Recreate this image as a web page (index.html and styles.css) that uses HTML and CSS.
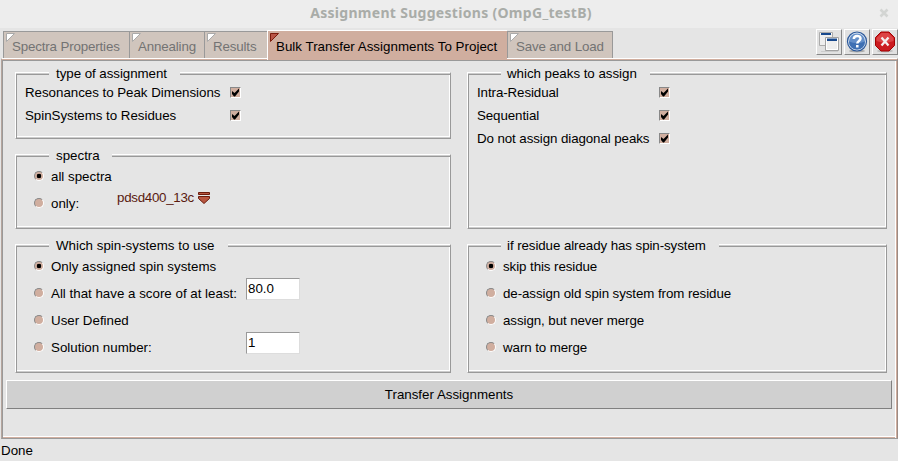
FILE: index.html
```html
<!DOCTYPE html>
<html lang="en">
<head>
<meta charset="utf-8">
<title>Assignment Suggestions (OmpG_testB)</title>
<link rel="stylesheet" href="styles.css">
</head>
<body>
<header class="titlebar"><span class="title">Assignment Suggestions (OmpG_testB)</span>
<svg class="close" width="10" height="10" viewBox="0 0 10 10"><path d="M1.5 1.5l7 7M8.5 1.5l-7 7" stroke="#d3d5d3" stroke-width="2.6"/></svg></header>
<div class="toolbar">
<nav class="tabs">
<div class="tab t1"><svg class="flag" width="9" height="9"><path d="M.5 .5h8l-8 8z"/></svg><span>Spectra Properties</span></div>
<div class="tab t2"><svg class="flag" width="9" height="9"><path d="M.5 .5h8l-8 8z"/></svg><span>Annealing</span></div>
<div class="tab t3"><svg class="flag" width="9" height="9"><path d="M.5 .5h8l-8 8z"/></svg><span>Results</span></div>
<div class="tab t4 active"><svg class="flag" width="9" height="9"><path d="M.5 .5h8l-8 8z"/></svg><span>Bulk Transfer Assignments To Project</span></div>
<div class="tab t5"><svg class="flag" width="9" height="9"><path d="M.5 .5h8l-8 8z"/></svg><span>Save and Load</span></div>
</nav>
<div class="tools">
<button class="tool"><svg width="22" height="22" viewBox="0 0 22 22"><path d="M1.5 1.5h13v13h-13z" fill="#eee" stroke="#aaa"/><path d="M2 2h12v1H2z" fill="#fff"/><path d="M3 2h10v2H3z" fill="#17488d"/><path d="M7.500 6.500h13v13h-13z" fill="#eee" stroke="#a2a2a2"/><path d="M8.500 7.500h11v11h-11z" fill="none" stroke="#fff"/><path d="M9 7.500h10v2.500H9z" fill="#17488d"/><path d="M3 20.500h17" stroke="#ccc"/></svg></button>
<button class="tool"><svg width="22" height="22" viewBox="0 0 22 22"><ellipse cx="11" cy="20" rx="8" ry="1.500" fill="#aaa"/><circle cx="11" cy="10.500" r="9.500" fill="#dce6f2" stroke="#2c599b" stroke-width="1.200"/><circle cx="11" cy="10.500" r="8" fill="#648fc9"/><path d="M3 10.500a8 8 0 0 0 16 0q-8 3-16 0" fill="#3f70b3"/><path d="M7.800 8c0-4 6.700-4 6.700-.4 0 2.400-3.200 2.200-3.200 4.900M11.300 14v2.600" fill="none" stroke="#fff" stroke-width="2.500"/></svg></button>
<button class="tool last"><svg width="22" height="22" viewBox="0 0 22 22"><ellipse cx="11" cy="20" rx="8" ry="1.500" fill="#bbb"/><path d="M7 1h8l5.500 5.500v8L15 20H7l-5.500-5.500v-8z" fill="#cb1b20" stroke="#a40000"/><path d="M7.500 2h7l5 5v3q-8 3-17 0V7z" fill="#dc4345"/><path d="M7.500 6.500l7 8M14.500 6.500l-7 8" stroke="#f4eeee" stroke-width="2.300"/></svg></button>
</div>
</div>
<main class="panel">
<div class="groups">
<section class="group g-type"><h2>type of assignment</h2>
<div class="check wide"><span>Resonances to Peak Dimensions</span><i class="box"><svg width="9" height="9"><path d="M1 3v3l2 2.500h1L8 3.500V.5L3.500 5z"/></svg></i></div>
<div class="check wide"><span>SpinSystems to Residues</span><i class="box"><svg width="9" height="9"><path d="M1 3v3l2 2.500h1L8 3.500V.5L3.500 5z"/></svg></i></div>
</section>
<section class="group g-peaks"><h2>which peaks to assign</h2>
<div class="check"><span>Intra-Residual</span><i class="box"><svg width="9" height="9"><path d="M1 3v3l2 2.500h1L8 3.500V.5L3.500 5z"/></svg></i></div>
<div class="check"><span>Sequential</span><i class="box"><svg width="9" height="9"><path d="M1 3v3l2 2.500h1L8 3.500V.5L3.500 5z"/></svg></i></div>
<div class="check"><span>Do not assign diagonal peaks</span><i class="box"><svg width="9" height="9"><path d="M1 3v3l2 2.500h1L8 3.500V.5L3.500 5z"/></svg></i></div>
</section>
<section class="group g-spectra"><h2>spectra</h2>
<div class="radio"><i class="dot on"></i><span>all spectra</span></div>
<div class="radio"><i class="dot"></i><span class="only">only:</span><span class="pulldown">pdsd400_13c<svg width="12" height="12"><path d="M.5 .5h11v2H.5zM.5 4.500h11v2L6 11.500.5 6.500z" fill="#b85640" stroke="#6b1c0c"/></svg></span></div>
</section>
<section class="group g-spin"><h2>Which spin-systems to use</h2>
<div class="radio"><i class="dot on"></i><span>Only assigned spin systems</span></div>
<div class="radio"><i class="dot"></i><span class="lab">All that have a score of at least:</span><span class="entry">80.0</span></div>
<div class="radio"><i class="dot"></i><span>User Defined</span></div>
<div class="radio"><i class="dot"></i><span class="lab">Solution number:</span><span class="entry">1</span></div>
</section>
<section class="group g-residue"><h2>if residue already has spin-system</h2>
<div class="radio"><i class="dot on"></i><span>skip this residue</span></div>
<div class="radio"><i class="dot"></i><span>de-assign old spin system from residue</span></div>
<div class="radio"><i class="dot"></i><span>assign, but never merge</span></div>
<div class="radio"><i class="dot"></i><span>warn to merge</span></div>
</section>
</div>
<button class="transfer">Transfer Assignments</button>
</main>
<footer>Done</footer>
</body>
</html>
```
FILE: styles.css
```css
* { box-sizing: border-box; }
body { margin: 0; width: 898px; height: 461px; overflow: hidden; background: #e5e5e5; color: #000; font: 13.33px/16px "Liberation Sans", sans-serif; display: flex; flex-direction: column; white-space: nowrap; }
button { font: inherit; color: inherit; padding: 0; border-radius: 0; }
svg { display: block; flex: none; }
.titlebar { height: 28px; flex: none; background: #ededed; display: flex; align-items: center; justify-content: center; padding: 0 0 3px 4px; position: relative; }
.title { font: bold 14px/20px "Noto Sans", sans-serif; letter-spacing: .3px; color: #a9aca8; }
.close { position: absolute; right: 9px; top: 8px; }
.toolbar { height: 30px; flex: none; display: flex; justify-content: space-between; padding-left: 3px; align-items: flex-end; }
.tabs { display: flex; align-items: flex-end; }
.tab { height: 27px; background: #d0c5bd; border: 1px solid #999; border-width: 1px 0 0 1px; color: #737373; padding: 7px 0 0 8px; position: relative; letter-spacing: -.15px; }
.t1 { width: 126px; }
.t2 { width: 75px; }
.t3 { width: 63px; }
.t4 { width: 240px; }
.t5 { width: 106px; border-right-width: 1px; }
.active { height: 30px; margin-bottom: -2px; background: #d0ae9f; color: #000; border-color: #fff; padding-top: 8px; letter-spacing: .02px; }
.flag { position: absolute; left: 2px; top: 1px; }
.active .flag { top: 2px; }
.flag path { fill: #fff; stroke: #aaa; stroke-width: 1; }
.active .flag path { fill: #b85546; stroke: #7d1c0c; }
.tools { display: flex; gap: 2px; padding-bottom: 3px; }
.tool { width: 26px; height: 26px; background: #e1e1e1; border: 1px solid; border-color: #fff #888 #888 #fff; display: flex; align-items: center; justify-content: center; }
.panel { height: 381px; flex: none; margin: 0 0 0 1px; border: 1px solid; border-color: #fff #9b8a83 #999 #b5a59d; background: #e5e5e5; box-shadow: inset 0 1px #d0ae9f, inset 0 2px #999, inset -1px 0 #d0ae9f, inset -2px 0 #fff, inset 1px 0 #999, inset 0 -1px #d0ae9f, inset 0 -2px #fff; }
.groups { display: grid; grid-template-columns: 436px 420px; grid-template-rows: 67px 75px 129px; gap: 15px 16px; padding: 13px 0 0 13px; }
.group { border: 1px solid; border-color: #fff #999 #999 #fff; position: relative; padding: 12px 0 0 9px; box-shadow: inset 0 1px #ccc, inset 1px 2px #999, inset 0 -1px #ccc, inset -1px -2px #fff; min-width: 0; }
.g-peaks { grid-column: 2; grid-row: 1 / span 2; letter-spacing: -.09px; }
.g-spectra { grid-column: 1; grid-row: 2; }
.g-spectra, .g-spin, .g-residue { padding-top: 14px; }
.g-residue { letter-spacing: -.08px; }
.group h2 { font: inherit; margin: 0; position: absolute; top: -7px; left: 33px; padding: 0 13px 0 7px; background: #e5e5e5; }
.g-peaks h2, .g-residue h2 { padding-left: 6px; }
.g-peaks h2 { letter-spacing: -.03px; }
.g-spectra h2 { padding-right: 12px; }
.g-type h2 { letter-spacing: -.05px; }
.check { display: flex; align-items: center; height: 16px; margin-bottom: 7px; }
.check span { width: 182px; }
.check.wide span { width: 205px; letter-spacing: -.03px; }
.box { width: 11px; height: 11px; margin-top: -2px; background: #d0ae9f; border: 1px solid; border-color: #888 #fff #fff #888; }
.radio { height: 16px; margin: 0 0 11px 9px; display: flex; align-items: center; }
.dot { width: 10px; height: 10px; border-radius: 50%; background: #d0ae9f; border: 1px solid; border-color: #888 #fff #fff #888; margin: -2px 7px 0 0; flex: none; }
.dot.on { background: radial-gradient(circle, #000 0 2px, #d0ae9f 2.6px); }
.only { width: 66px; }
.pulldown { color: #5a1a10; display: flex; gap: 4px; align-items: center; margin-top: -12px; letter-spacing: -.28px; }
.lab { width: 195px; }
.entry { width: 54px; height: 22px; background: #fff; border: 1px solid; border-color: #999 #ddd #ddd #999; padding: 2px 0 0 1px; margin-top: -11px; }
.transfer { display: block; width: 886px; height: 29px; margin: 7px 0 0 4px; background: #d0d0d0; border: 1px solid; border-color: #fff #808080 #808080 #fff; }
footer { padding: 4px 0 0 1px; }
```
